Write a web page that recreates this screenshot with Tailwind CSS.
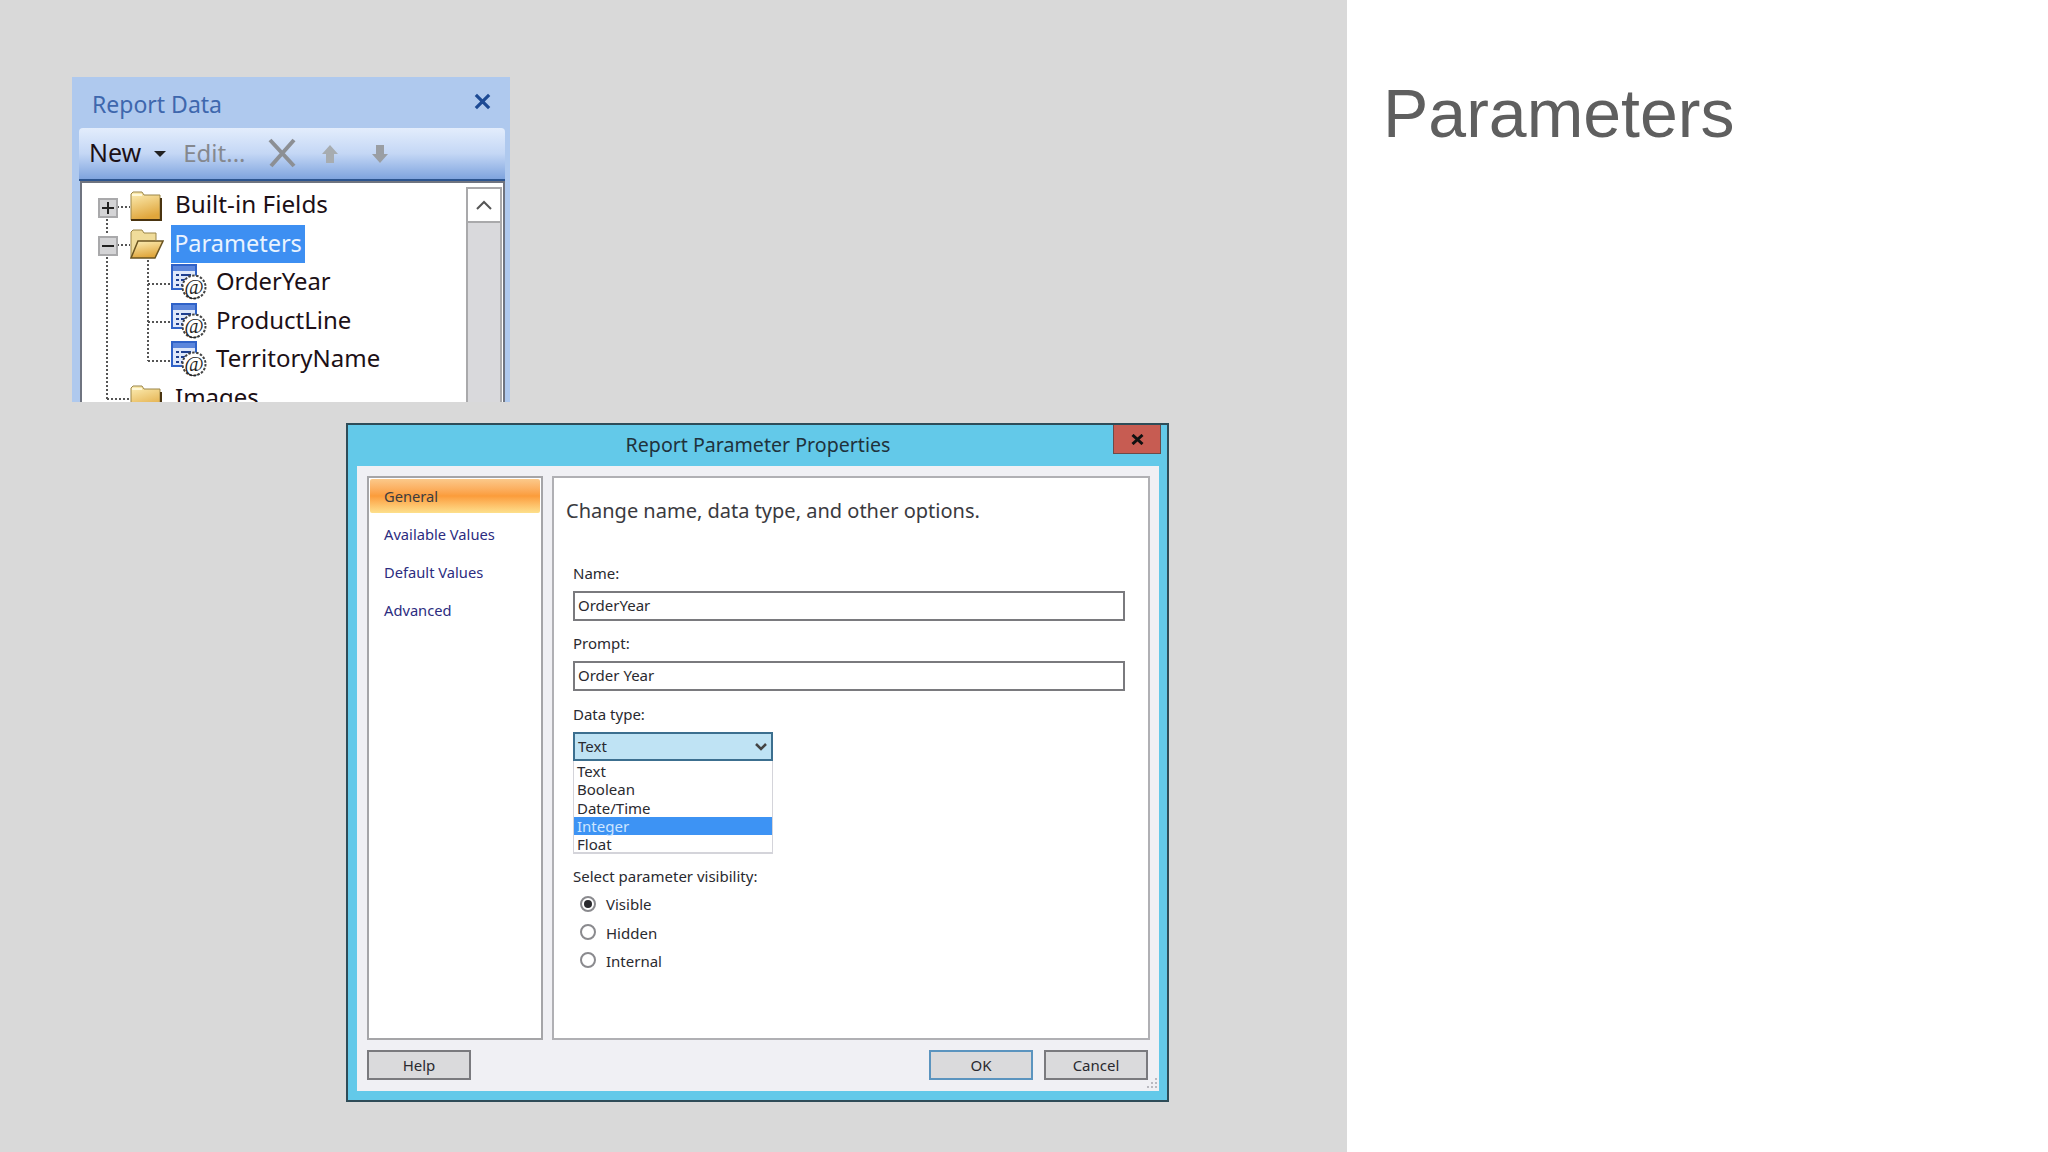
<!DOCTYPE html>
<html lang="en">
<head>
    <meta charset="UTF-8">
    <title>Parameters</title>
    <script src="https://cdn.jsdelivr.net/npm/@tailwindcss/browser@4"></script>
</head>
<body class="w-[2048px] h-[1152px] overflow-hidden flex bg-white font-['Noto_Sans',sans-serif]">

    <!-- shared icons -->
    <svg class="absolute w-0 h-0">
        <defs>
            <linearGradient id="folderFill" x1="0" y1="0" x2="0.3" y2="1">
                <stop offset="0" stop-color="#fdf0b8"/>
                <stop offset="1" stop-color="#e0a63c"/>
            </linearGradient>
            <symbol id="param" viewBox="0 0 36 36">
                <rect x="1" y="1" width="24" height="24" fill="#dfe8fa" stroke="#2f62c8" stroke-width="2"/>
                <rect x="2" y="2" width="22" height="5" fill="#5b86dc"/>
                <path d="M5 11h3M10 11h10M5 16h3M10 16h8M5 21h3M10 21h6" stroke="#1f3f8f" stroke-width="2"/>
                <circle cx="23" cy="23" r="11.5" fill="#fff" stroke="#444" stroke-width="2" stroke-dasharray="2.5 1.5"/>
                <text x="23" y="30" text-anchor="middle" font-family="Liberation Serif" font-style="italic" font-size="21" fill="#222">@</text>
            </symbol>
            <symbol id="folder" viewBox="0 0 32 32">
                <path d="M1 30V4l2-2h9l2 3h16v25z" fill="url(#folderFill)" stroke="#9a8548" stroke-width="1"/>
                <path d="M1 30h30V8" fill="none" stroke="#4a3410" stroke-width="2"/>
                <path d="M2 5h10" stroke="#fff8d8" stroke-width="2"/>
            </symbol>
        </defs>
    </svg>

    <!-- grey slide area -->
    <div class="relative w-[1347px] h-full bg-[#d9d9d9]">

        <!-- Report Data pane -->
        <div class="absolute left-[72px] top-[77px] w-[438px] h-[325px] overflow-hidden bg-[#afc9ee] flex flex-col text-[#1c1016]">
            <div class="h-[51px] shrink-0 flex items-center justify-between pl-[20px] pr-[18px]">
                <span class="text-[23px] text-[#3e67ad] mt-[4px]">Report Data</span>
                <svg class="w-[19px] h-[19px] mb-[3px]" viewBox="0 0 20 20"><path d="M3 3l14 14M17 3L3 17" stroke="#1d4a94" stroke-width="3.4"/></svg>
            </div>
            <div class="h-[53px] shrink-0 ml-[7px] mr-[5px] rounded-t-[4px] border-b-[2px] border-[#2c5590] bg-gradient-to-b from-[#e3edfc] via-[#c4d7f5] to-[#7fa4de] flex items-center pl-[10px] pb-[2px]">
                <span class="text-[25px]">New</span>
                <svg class="w-[12px] h-[6px] ml-[13px] mt-[3px]" viewBox="0 0 12 6"><path d="M0 0h12L6 6z" fill="#222"/></svg>
                <span class="text-[24px] text-[#85888e] ml-[17px]">Edit...</span>
                <svg class="w-[30px] h-[30px] ml-[21px]" viewBox="0 0 30 30"><path d="M3 2l24 26M27 2L4 28" stroke="#8c8f94" stroke-width="4"/></svg>
                <svg class="w-[20px] h-[20px] ml-[23px] mt-[3px]" viewBox="0 0 20 20"><path d="M10 1l8 9h-4v9H6v-9H2z" fill="#a7acb0"/></svg>
                <svg class="w-[20px] h-[20px] ml-[30px] mt-[2px]" viewBox="0 0 20 20"><path d="M6 1h8v9h4l-8 9-8-9h4z" fill="#9a9ea3"/></svg>
            </div>
            <div class="relative flex-1 ml-[8px] mr-[5px] bg-white border-t-[2px] border-x-[2px] border-[#6f7480] flex">
                <!-- dotted tree lines -->
                <svg class="absolute left-0 top-0 w-[200px] h-[220px]" viewBox="0 0 200 220" fill="none" stroke="#555" stroke-width="2" stroke-dasharray="2 2">
                    <path d="M25 36v15M25 74v144M35 24h13M35 62h13"/>
                    <path d="M66 77v101M66 101h23M66 139h23M66 178h23M25 216h23"/>
                </svg>
                <div class="relative flex-1 flex flex-col pt-[3px]">
                    <div class="h-[38.4px] flex items-center pl-[16px]">
                        <span class="w-[20px] h-[20px] mt-[5px] bg-[#d4d4d6] border-[2px] border-[#a9a9ab] flex items-center justify-center">
                            <svg class="w-[12px] h-[12px]" viewBox="0 0 12 12"><path d="M0 6h12M6 0v12" stroke="#222" stroke-width="2"/></svg>
                        </span>
                        <svg class="w-[32px] h-[32px] ml-[12px] mt-[1px]"><use href="#folder"/></svg>
                        <span class="text-[24.3px] ml-[13px] mb-[2px]">Built-in Fields</span>
                    </div>
                    <div class="h-[38.4px] flex items-center pl-[16px]">
                        <span class="w-[20px] h-[20px] mt-[5px] bg-[#d4d4d6] border-[2px] border-[#a9a9ab] flex items-center justify-center">
                            <svg class="w-[12px] h-[12px]" viewBox="0 0 12 12"><path d="M0 6h12" stroke="#222" stroke-width="2"/></svg>
                        </span>
                        <svg class="w-[34px] h-[32px] ml-[12px] mt-[1px]" viewBox="0 0 34 32">
                            <path d="M1 30V4l2-2h9l2 3h12v7" fill="#f0dc9a" stroke="#9a8548"/>
                            <path d="M1 30l7-17h25l-8 17z" fill="url(#folderFill)" stroke="#6b5420" stroke-width="1.5"/>
                        </svg>
                        <span class="text-[23.5px] text-[#e9f3ff] bg-[#3d8ff2] h-[38px] w-[134px] flex items-center justify-center ml-[7px]">Parameters</span>
                    </div>
                    <div class="h-[38.4px] flex items-center pl-[89px]">
                        <svg class="w-[36px] h-[36px] mt-[1px]"><use href="#param"/></svg>
                        <span class="text-[23.8px] ml-[9px]">OrderYear</span>
                    </div>
                    <div class="h-[38.4px] flex items-center pl-[89px]">
                        <svg class="w-[36px] h-[36px] mt-[1px]"><use href="#param"/></svg>
                        <span class="text-[24px] ml-[9px]">ProductLine</span>
                    </div>
                    <div class="h-[38.4px] flex items-center pl-[89px]">
                        <svg class="w-[36px] h-[36px] mt-[1px]"><use href="#param"/></svg>
                        <span class="text-[24px] ml-[9px] mb-[1px]">TerritoryName</span>
                    </div>
                    <div class="h-[38.4px] flex items-center pl-[48px]">
                        <svg class="w-[32px] h-[32px] mt-[6px]"><use href="#folder"/></svg>
                        <span class="text-[24px] ml-[13px]">Images</span>
                    </div>
                </div>
                <!-- scrollbar -->
                <div class="w-[36px] mr-[1px] mt-[4px] border-x-[2px] border-[#a9a9ab] bg-[#d9d9dc] flex flex-col">
                    <div class="h-[36px] bg-white border-y-[2px] border-[#a9a9ab] flex items-center justify-center">
                        <svg class="w-[16px] h-[10px]" viewBox="0 0 16 10"><path d="M1 9l7-7 7 7" fill="none" stroke="#555" stroke-width="2"/></svg>
                    </div>
                </div>
            </div>
        </div>

        <!-- Report Parameter Properties dialog -->
        <div class="absolute left-[346px] top-[423px] w-[823px] h-[679px] border-[2px] border-[#2e4c58] bg-[#63c9e9] flex flex-col pl-[9px] pr-[8px] pb-[9px] text-[#2a2a30]">
            <div class="relative h-[41px] shrink-0 flex items-center justify-center">
                <span class="text-[19.6px] text-[#20323c] mb-[2px]">Report Parameter Properties</span>
                <div class="absolute right-[-2px] top-0 w-[48px] h-[29px] bg-[#c75c52] border-x-[1px] border-b-[1px] border-[#6d4a48] flex items-center justify-center">
                    <svg class="w-[13px] h-[11px]" viewBox="0 0 13 11"><path d="M1.5 1l10 9M11.5 1l-10 9" stroke="#111" stroke-width="3"/></svg>
                </div>
            </div>
            <div class="flex-1 bg-[#f0f0f4] flex flex-col pt-[10px] pl-[10px] pr-[9px] pb-[11px]">
                <div class="h-[564px] flex gap-[9px]">
                    <!-- page list -->
                    <div class="w-[176px] shrink-0 bg-white border-[2px] border-[#a5a5a8] text-[14.7px] text-[#2c2c80] flex flex-col">
                        <div class="h-[34px] mt-[1px] mx-[1px] rounded-[2px] bg-gradient-to-b from-[#fbc98a] via-[#fb9c3a] to-[#fde08c] text-[#3c3c40] flex items-center pl-[14px]">General</div>
                        <div class="h-[38px] flex items-center pl-[15px] mt-[2px]">Available Values</div>
                        <div class="h-[38px] flex items-center pl-[15px]">Default Values</div>
                        <div class="h-[38px] flex items-center pl-[15px]">Advanced</div>
                    </div>
                    <!-- general page -->
                    <div class="flex-1 bg-white border-[2px] border-[#b0b0b4] pl-[12px] flex flex-col">
                        <p class="text-[20px] text-[#3a3a40] h-[28px] leading-[28px] mt-[19px]">Change name, data type, and other options.</p>
                        <div class="ml-[7px] flex flex-col text-[15px]">
                            <label class="h-[20px] leading-[20px] mt-[38px]">Name:</label>
                            <div class="w-[552px] h-[30px] mt-[8px] border-[2px] border-[#7a7a7e] flex items-center pl-[3px] pb-[2px]">OrderYear</div>
                            <label class="h-[20px] leading-[20px] mt-[12px]">Prompt:</label>
                            <div class="w-[552px] h-[30px] mt-[8px] border-[2px] border-[#7a7a7e] flex items-center pl-[3px] pb-[2px]">Order Year</div>
                            <label class="h-[20px] leading-[20px] mt-[13px]">Data type:</label>
                            <div class="w-[200px] h-[29px] mt-[8px] border-[2px] border-[#3c6f8f] bg-[#bfe3f4] flex items-center justify-between pl-[3px] pr-[4px]">
                                <span>Text</span>
                                <svg class="w-[12px] h-[8px]" viewBox="0 0 12 8"><path d="M1 1l5 5 5-5" fill="none" stroke="#444" stroke-width="2.5"/></svg>
                            </div>
                            <div class="w-[200px] h-[93px] border-x-[1px] border-b-[2px] border-[#d4d4da] flex flex-col pt-[1px] leading-[18.3px]">
                                <div class="h-[18.3px] pl-[3px]">Text</div>
                                <div class="h-[18.3px] pl-[3px]">Boolean</div>
                                <div class="h-[18.3px] pl-[3px]">Date/Time</div>
                                <div class="h-[18.3px] pl-[3px] bg-[#3d93f4] text-[#cfe6ff]">Integer</div>
                                <div class="h-[18.3px] pl-[3px]">Float</div>
                            </div>
                            <label class="h-[20px] leading-[20px] mt-[12px]">Select parameter visibility:</label>
                            <div class="flex flex-col ml-[7px] mt-[4px]">
                                <div class="h-[28.2px] flex items-center gap-[10px]">
                                    <span class="w-[16px] h-[16px] rounded-full border-[2px] border-[#8a8a8e] flex items-center justify-center"><span class="w-[8px] h-[8px] rounded-full bg-[#2a2a2e]"></span></span>
                                    <span class="mt-[1px]">Visible</span>
                                </div>
                                <div class="h-[28.2px] flex items-center gap-[10px]">
                                    <span class="w-[16px] h-[16px] rounded-full border-[2px] border-[#8a8a8e]"></span>
                                    <span class="mt-[1px]">Hidden</span>
                                </div>
                                <div class="h-[28.2px] flex items-center gap-[10px]">
                                    <span class="w-[16px] h-[16px] rounded-full border-[2px] border-[#8a8a8e]"></span>
                                    <span class="mt-[1px]">Internal</span>
                                </div>
                            </div>
                        </div>
                    </div>
                </div>
                <!-- buttons -->
                <div class="relative flex-1 flex items-start justify-between text-[15px] pt-[10px] pr-[2px]">
                    <button class="w-[104px] h-[30px] bg-[#dadadc] border-[2px] border-[#7a7a7e]">Help</button>
                    <div class="flex gap-[11px]">
                        <button class="w-[104px] h-[30px] bg-[#dadadc] border-[2px] border-[#5b94bf]">OK</button>
                        <button class="w-[104px] h-[30px] bg-[#dadadc] border-[2px] border-[#7a7a7e]">Cancel</button>
                    </div>
                    <svg class="absolute right-[-8px] bottom-[-9px] w-[12px] h-[12px]" viewBox="0 0 12 12" fill="#b9b9c0">
                        <rect x="9" y="1" width="2" height="2"/><rect x="9" y="5" width="2" height="2"/><rect x="9" y="9" width="2" height="2"/><rect x="5" y="5" width="2" height="2"/><rect x="5" y="9" width="2" height="2"/><rect x="1" y="9" width="2" height="2"/>
                    </svg>
                </div>
            </div>
        </div>
    </div>

    <!-- title side -->
    <div class="flex-1 pl-[36px] pt-[73px]">
        <h1 class="font-['Liberation_Sans',sans-serif] text-[68px] leading-[80px] text-[#5f5f5f]">Parameters</h1>
    </div>
</body>
</html>
